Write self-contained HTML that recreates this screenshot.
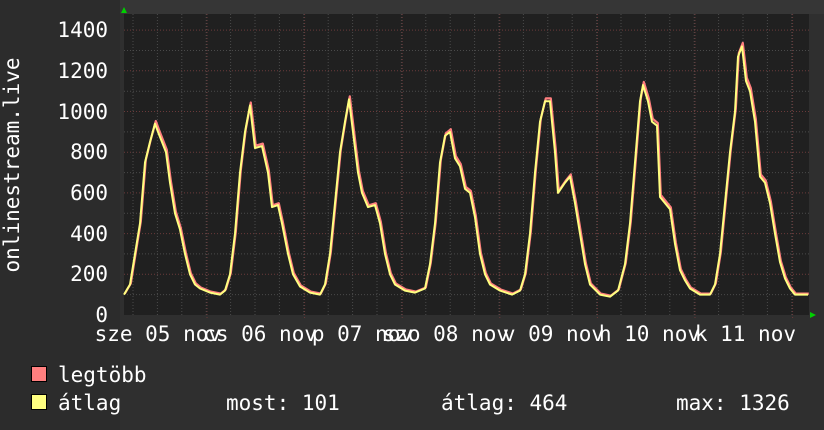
<!DOCTYPE html>
<html><head><meta charset="utf-8"><style>
html,body{margin:0;padding:0;background:#2f2f2f;}
svg{display:block}
text{font-family:"DejaVu Sans Mono","Liberation Mono",monospace;fill:#fff;font-size:21px}
</style></head><body>
<svg id="s" width="824" height="430" xmlns="http://www.w3.org/2000/svg">
<rect x="0" y="0" width="824" height="430" fill="#2f2f2f"/>
<rect x="0" y="0" width="824" height="14" fill="#363636"/>
<rect x="0" y="0" width="120" height="430" fill="#2c2c2c"/>
<rect x="124" y="14" width="685" height="301" fill="#202020"/>
<g id="grid"></g>
<polyline id="red" fill="none" stroke="#ff7f7f" stroke-width="2.2" stroke-linejoin="round"/>
<polyline id="yel" fill="none" stroke="#ffff80" stroke-width="2" stroke-linejoin="round"/>
<polygon points="121,13 127,13 124,7" fill="#00d000"/>
<polygon points="810,312 810,318 816,315" fill="#00d000"/>
<g text-anchor="end">
<text x="108" y="37">1400</text><text x="108" y="78">1200</text><text x="108" y="119">1000</text>
<text x="108" y="159">800</text><text x="108" y="200">600</text><text x="108" y="241">400</text>
<text x="108" y="281">200</text><text x="108" y="322">0</text>
</g>
<text transform="translate(19,165) rotate(-90)" text-anchor="middle">onlinestream.live</text>
<g text-anchor="end">
<text x="221" y="341">sze 05 nov</text><text x="317" y="341">cs 06 nov</text>
<text x="413" y="341">p 07 nov</text><text x="509" y="341">szo 08 nov</text>
<text x="604" y="341">v 09 nov</text><text x="700" y="341">h 10 nov</text>
<text x="796" y="341">k 11 nov</text>
</g>
<rect x="31.5" y="366.5" width="15" height="15" fill="#ff7f7f" stroke="#000"/>
<rect x="31.5" y="394.5" width="15" height="15" fill="#ffff80" stroke="#000"/>
<text x="58" y="382">legtöbb</text>
<text x="58" y="410">átlag</text>
<text x="226" y="410">most: 101</text>
<text x="441" y="410">átlag: 464</text>
<text x="676" y="410">max: 1326</text>
</svg>
<script>
var g=document.getElementById('grid'),h='';
function Y(v){return 315-v*0.2035;}
for(var v=100;v<=1400;v+=100){var y=Y(v).toFixed(1);h+='<line x1="124" x2="809" y1="'+y+'" y2="'+y+'" stroke="'+(v%200==0?'#6a3a3a':'#4a4a4a')+'" stroke-dasharray="1,2"/>';}
for(var x=133;x<809;x+=24.4){h+='<line y1="14" y2="315" x1="'+x.toFixed(1)+'" x2="'+x.toFixed(1)+'" stroke="#4a4a4a" stroke-dasharray="1,2"/>';}
for(var k=0;k<7;k++){var x=(207+97.6*k).toFixed(1);h+='<line y1="14" y2="318" x1="'+x+'" x2="'+x+'" stroke="#6a3a3a" stroke-dasharray="1,2"/>';}
g.innerHTML=h;
var d=[124,100,130,150,135,300,140,450,145,750,150,850,155,940,158,900,162,850,166,800,170,650,175,500,180,420,185,300,190,200,195,150,200,130,210,110,220,100,225,120,230,200,235,400,240,700,245,900,250,1030,255,820,262,830,268,700,272,530,278,540,282,450,288,300,293,200,300,140,310,110,320,100,325,150,330,300,335,550,340,800,345,950,349,1060,353,900,358,700,362,600,368,530,375,540,380,450,385,300,390,200,395,150,405,120,415,110,425,130,430,250,435,450,440,750,445,880,450,900,455,770,460,730,465,620,470,600,475,480,480,300,485,200,490,150,500,120,512,100,520,120,525,200,530,400,535,700,540,950,545,1050,550,1050,555,800,558,600,565,650,570,680,575,550,580,400,585,250,590,150,600,100,610,90,618,120,625,250,630,450,635,750,640,1050,643,1130,648,1050,652,950,657,930,660,580,665,550,670,520,675,350,680,220,685,170,690,130,700,100,710,100,715,150,720,300,725,550,730,800,735,1000,738,1270,742,1320,746,1150,750,1100,755,950,760,680,765,650,770,550,775,400,780,260,785,180,790,130,795,100,808,100];
var p='',q='';for(var i=0;i<d.length;i+=2){p+=d[i]+','+Y(d[i+1]).toFixed(1)+' ';q+=(d[i]+0.8)+','+(Y(d[i+1]*1.01)-0.8).toFixed(1)+' ';}
document.getElementById('yel').setAttribute('points',p);
document.getElementById('red').setAttribute('points',q);
</script>
</body></html>
